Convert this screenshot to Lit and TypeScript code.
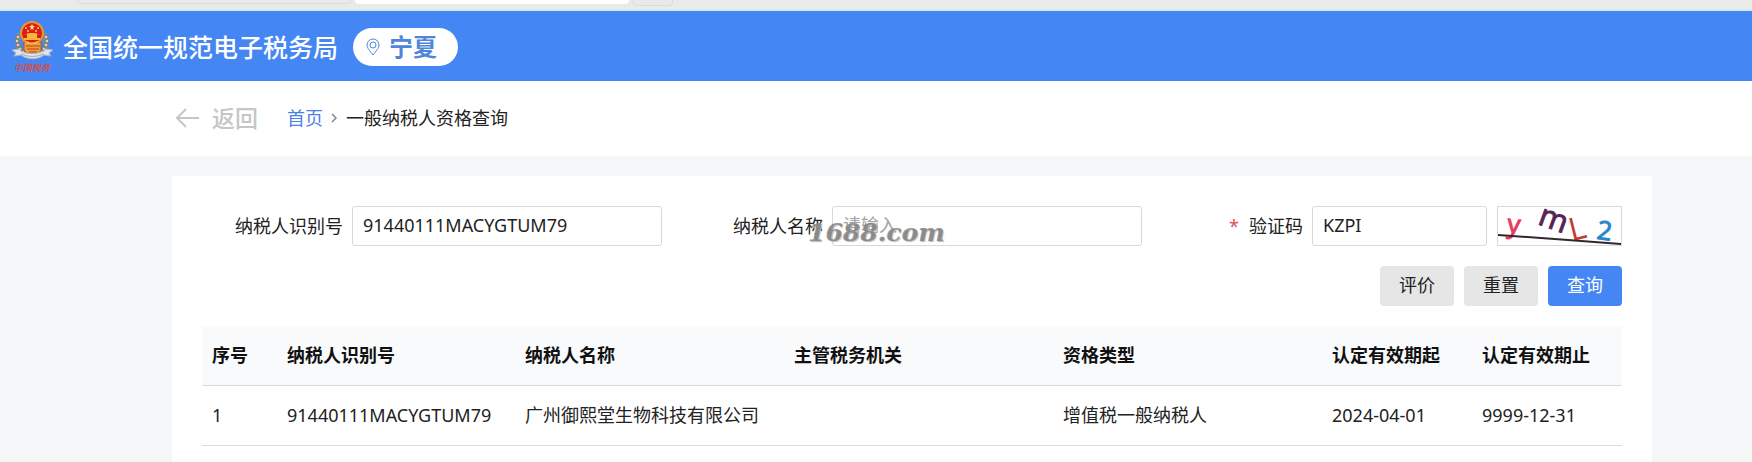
import { LitElement, html, css, svg } from "lit";
import { customElement } from "lit/decorators.js";

interface Row {
  id: string;
  name: string;
  office: string;
  type: string;
  from: string;
  to: string;
}

const COLUMNS = ["序号", "纳税人识别号", "纳税人名称", "主管税务机关", "资格类型", "认定有效期起", "认定有效期止"];

const ROWS: Row[] = [
  {
    id: "91440111MACYGTUM79",
    name: "广州御熙堂生物科技有限公司",
    office: "",
    type: "增值税一般纳税人",
    from: "2024-04-01",
    to: "9999-12-31",
  },
];

const FONT = css`"Noto Sans", "Noto Sans CJK SC", sans-serif`;

@customElement("tax-emblem")
class TaxEmblem extends LitElement {
  static styles = css`
    :host { display: block; }
    svg { display: block; }
    .script { font: italic 500 9px "Noto Sans CJK SC", sans-serif; fill: #e2462f; }
  `;

  render() {
    const ears = [
      [6, 17], [5, 21], [6, 25], [8, 29], [11, 32],
      [34, 17], [35, 21], [34, 25], [32, 29], [29, 32],
    ];
    return html`
      <svg width="42" height="54" viewBox="0 0 42 54" role="img" aria-label="中国税务">
        <path d="M8 14C4 20 5 29 12 34M32 14C36 20 35 29 28 34" fill="none" stroke="#8d8f8b" stroke-width="5" />
        ${ears.map(([x, y]) => svg`<circle cx=${x} cy=${y} r="2" fill="#d9d6c4" stroke="#6d6f72" stroke-width="1" />`)}
        <path d="M12 22h17v8c-2 4-5 5-8 6-4-1-7-3-9-6z" fill="#e8a13a" stroke="#a8522a" />
        <path d="M14 26h14M15 29h12M17 32h8" stroke="#c63a20" />
        <circle cx="20" cy="13" r="12" fill="#e9952e" />
        <circle cx="20" cy="13" r="10" fill="#dd1c15" />
        <path d="M20 4l1 2h2l-2 2 1 2-2-1-2 1 1-2-2-2h2z" fill="#ffe27a" />
        <circle cx="14" cy="8" r="1" fill="#ffd65a" />
        <circle cx="26" cy="8" r="1" fill="#ffd65a" />
        <circle cx="16" cy="11" r="1" fill="#ffd65a" />
        <circle cx="24" cy="11" r="1" fill="#ffd65a" />
        <path d="M14 15l2-2h8l2 2zM12 18h16v2H12zM15 15h10v3H15z" fill="#f7b53c" />
        <path d="M14 22q6 3 12 0" fill="none" stroke="#f7b53c" stroke-width="2" />
        <path d="M0 30l7-1c4 6 22 6 27 0l7 1-4 3 2 3-7-1c-6 5-17 5-23 0l-7 1 2-3z" fill="#dfe4e8" stroke="#a9b3bf" stroke-width="1" />
        <path d="M9 34q11 5 23 0" fill="none" stroke="#9dabba" />
        <text class="script" x="2" y="51">中国税务</text>
      </svg>
    `;
  }
}

@customElement("captcha-picture")
class CaptchaPicture extends LitElement {
  static styles = css`
    :host { display: block; }
    svg { display: block; }
    .glyph { font-family: "Open Sans", sans-serif; }
  `;

  render() {
    return html`
      <svg width="123" height="38" viewBox="0 0 123 38" aria-hidden="true">
        <g class="glyph">
          <text x="9" y="26" font-size="26" fill="#e63a5e" stroke="#e63a5e" transform="rotate(6 14 22)">y</text>
          <text x="40" y="22" font-size="31" fill="#55255a" stroke="#55255a" transform="rotate(20 54 16)">m</text>
          <text x="71" y="33" font-size="32" fill="#c8392b" transform="rotate(-14 78 22)">L</text>
          <text x="99" y="33" font-size="26" fill="#2787c8" stroke="#2787c8" transform="rotate(8 108 25)">2</text>
        </g>
        <path d="M0 28L70 33L123 37" fill="none" stroke="#33272d" stroke-width="2" />
      </svg>
    `;
  }
}

@customElement("app-root")
class AppRoot extends LitElement {
  static styles = css`
    :host {
      display: block;
      font: 18px/28px ${FONT};
      color: #222;
    }
    * { box-sizing: border-box; }

    .page {
      display: flex;
      flex-direction: column;
      min-height: 100vh;
      background: #f5f6f8;
    }

    .tabs {
      display: flex;
      gap: 4px;
      height: 11px;
      padding-left: 77px;
      background: #ebeaea;
      border-bottom: 2px solid #d7ebee;
    }
    .tab {
      width: 274px;
      height: 4px;
      border: 1px solid #dcdcdc;
      border-top: 0;
      border-radius: 0 0 4px 4px;
    }
    .tab.active { background: #fff; border-color: #fff; }
    .tab.add { width: 40px; height: 6px; }

    .header {
      display: flex;
      align-items: center;
      height: 70px;
      padding: 2px 12px 0;
      background: #4486f4;
    }
    .title {
      margin: 0 15px 0 9px;
      font-size: 25px;
      line-height: 36px;
      font-weight: 500;
      color: #fff;
    }
    .region {
      display: flex;
      align-items: center;
      gap: 9px;
      height: 38px;
      padding: 0 21px 0 13px;
      border: 0;
      border-radius: 19px;
      background: #fff;
      font: 700 24px/36px ${FONT};
      color: #4f86dc;
    }

    .crumbs {
      display: flex;
      align-items: center;
      height: 75px;
      padding: 0 100px 2px 175px;
      background: #fff;
    }
    .back {
      display: flex;
      align-items: center;
      gap: 13px;
      margin-right: 29px;
      padding: 0;
      border: 0;
      background: none;
      font: 500 23px/32px ${FONT};
      color: #c6c6c6;
    }
    .trail { display: flex; align-items: center; gap: 8px; }
    .trail a { color: #4a7fe6; text-decoration: none; }

    .card {
      flex: 1;
      margin: 20px 100px 0 172px;
      padding: 30px 30px 0;
      background: #fff;
    }
    .form {
      display: grid;
      grid-template-columns: repeat(3, minmax(0, 1fr));
      gap: 20px;
      margin-bottom: 20px;
    }
    .field {
      position: relative;
      display: flex;
      align-items: center;
    }
    .field label {
      flex: 0 0 150px;
      padding-right: 9px;
      text-align: right;
      white-space: nowrap;
    }
    .required { margin-right: 10px; color: #d9534f; }
    input {
      flex: 1;
      width: 0;
      min-width: 0;
      height: 40px;
      padding: 0 10px 2px;
      border: 1px solid #d6d8db;
      border-radius: 3px;
      background: #fff;
      font: 18px/28px ${FONT};
      color: #222;
    }
    input::placeholder { color: #a3a3a3; opacity: 1; }
    .captcha {
      flex: 0 0 125px;
      height: 40px;
      margin-left: 10px;
      padding: 0;
      border: 1px solid #d6d8db;
      background: #fff;
    }
    .watermark {
      position: absolute;
      left: 126px;
      top: 13px;
      font: italic 700 25px/28px "DejaVu Serif", serif;
      color: rgba(125, 125, 125, 0.8);
      text-shadow: 1px 1px 1px #bbb;
      pointer-events: none;
    }
    .actions {
      grid-column: 1 / -1;
      display: flex;
      justify-content: flex-end;
      gap: 10px;
    }
    .btn {
      height: 40px;
      padding: 0 19px 2px;
      border: 0;
      border-radius: 4px;
      background: #e6e6e6;
      font: 18px/28px ${FONT};
      color: #222;
    }
    .btn.primary { background: #4486f4; color: #fff; }

    table {
      width: 100%;
      table-layout: fixed;
      border-collapse: separate;
      border-spacing: 0;
    }
    th, td {
      height: 60px;
      padding: 0 10px 2px;
      border-bottom: 1px solid #d9dadc;
      text-align: left;
      white-space: nowrap;
    }
    th { background: #f9fafc; font-weight: 700; color: #111; }
    .c-index { width: 75px; }
    .c-id { width: 238px; }
    .c-date { width: 150px; }
  `;

  render() {
    return html`
      <div class="page">
        <div class="tabs"><div class="tab"></div><div class="tab active"></div><div class="tab add"></div></div>

        <header class="header">
          <tax-emblem></tax-emblem>
          <h1 class="title">全国统一规范电子税务局</h1>
          <button class="region" type="button">
            <svg width="14" height="18" viewBox="0 0 14 18" fill="none" stroke="#4f86dc" aria-hidden="true">
              <path d="M7 17C4 13 1 10 1 7a6 6 0 0 1 12 0c0 3-3 6-6 10z" />
              <circle cx="7" cy="7" r="3" />
            </svg>
            宁夏
          </button>
        </header>

        <nav class="crumbs" aria-label="面包屑">
          <button class="back" type="button">
            <svg width="24" height="20" viewBox="0 0 24 20" fill="none" stroke="#c6c6c6" stroke-width="2" aria-hidden="true">
              <path d="M24 10H2M11 1L2 10l9 9" />
            </svg>
            返回
          </button>
          <div class="trail">
            <a href="#">首页</a>
            <svg width="7" height="10" viewBox="0 0 7 10" fill="none" stroke="#888" stroke-width="1.5" aria-hidden="true">
              <path d="M1 1l4 4-4 4" />
            </svg>
            <span>一般纳税人资格查询</span>
          </div>
        </nav>

        <main class="card">
          <form class="form" @submit=${(e: Event) => e.preventDefault()}>
            <div class="field">
              <label for="taxId">纳税人识别号</label>
              <input id="taxId" type="text" value="91440111MACYGTUM79" />
            </div>
            <div class="field">
              <label for="taxName">纳税人名称</label>
              <input id="taxName" type="text" placeholder="请输入" />
              <span class="watermark">1688.com</span>
            </div>
            <div class="field">
              <label for="code"><span class="required">*</span>验证码</label>
              <input id="code" type="text" value="KZPI" required />
              <button class="captcha" type="button" aria-label="刷新验证码"><captcha-picture></captcha-picture></button>
            </div>
            <div class="actions">
              <button class="btn" type="button">评价</button>
              <button class="btn" type="reset">重置</button>
              <button class="btn primary" type="submit">查询</button>
            </div>
          </form>

          <table>
            <colgroup>
              <col class="c-index" /><col class="c-id" /><col /><col /><col /><col class="c-date" /><col class="c-date" />
            </colgroup>
            <thead>
              <tr>${COLUMNS.map((c) => html`<th scope="col">${c}</th>`)}</tr>
            </thead>
            <tbody>
              ${ROWS.map(
                (r, i) => html`
                  <tr>
                    <td>${i + 1}</td>
                    <td>${r.id}</td>
                    <td>${r.name}</td>
                    <td>${r.office}</td>
                    <td>${r.type}</td>
                    <td>${r.from}</td>
                    <td>${r.to}</td>
                  </tr>
                `,
              )}
            </tbody>
          </table>
        </main>
      </div>
    `;
  }
}
